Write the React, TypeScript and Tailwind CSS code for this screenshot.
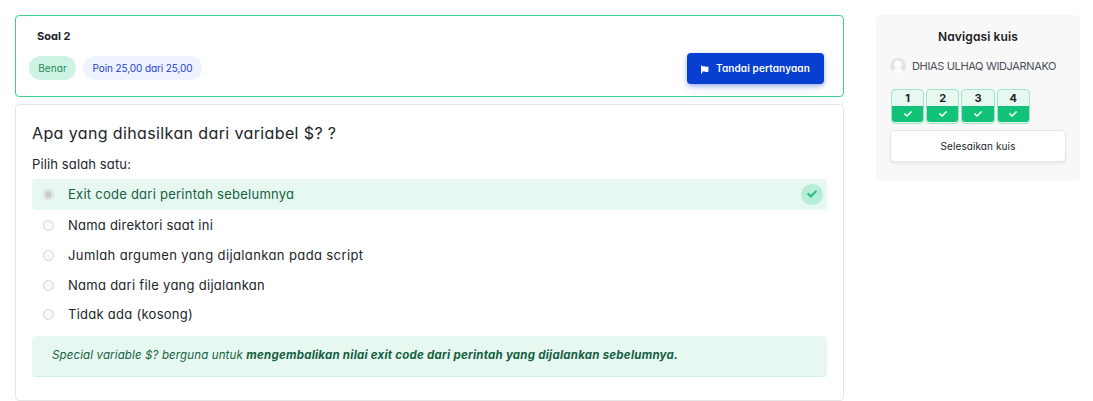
import type { ReactNode } from "react";

function Check({ className }: { className: string }) {
  return (
    <svg viewBox="0 0 512 512" fill="currentColor" className={className} aria-hidden="true">
      <path d="M173.9 439.4L7.5 273c-10-10-10-26.200 0-36.200l36.200-36.200c10-10 26.200-10 36.200 0L192 312.700 432.100 72.600c10-10 26.200-10 36.200 0l36.200 36.200c10 10 10 26.200 0 36.200L210.100 439.400c-10 10-26.200 10-36.200 0z" />
    </svg>
  );
}

function Flag() {
  return (
    <svg viewBox="0 0 8 9" fill="currentColor" className="mt-px h-[9px] w-2" aria-hidden="true">
      <path d="M0 .5h1.200v8H0z" />
      <path d="M1 1.500c1.200-.5 2.100-.4 3.100 0s2 .4 3.300-.1v5.300c-1.300.5-2.300.4-3.300.1S2.200 6.300 1 6.700z" />
    </svg>
  );
}

function Avatar() {
  return (
    <svg viewBox="0 0 16 16" className="size-4 rounded-full" aria-hidden="true">
      <rect width="16" height="16" fill="#e4e4e4" />
      <ellipse cx="8" cy="6.600" rx="3.600" ry="4.100" fill="#fdfdfd" />
      <path d="M2.200 16c0-3.300 1.500-4.600 4-5.400h3.600c2.500.8 4 2.100 4 5.400z" fill="#fdfdfd" />
    </svg>
  );
}

function Radio({ checked = false }: { checked?: boolean }) {
  return (
    <span
      className={
        checked
          ? "flex size-[11px] items-center justify-center rounded-full border border-[#cbd5d0] bg-[#f0f7f4]"
          : "flex size-[11px] items-center justify-center rounded-full border border-[#d4d4d4] bg-[#f8f8f8]"
      }
    >
      {checked && <span className="size-[7px] rounded-full bg-[#c6cecb]" />}
    </span>
  );
}

function Option({ children, className }: { children: ReactNode; className: string }) {
  return (
    <div className="flex h-[29.700px] items-center pl-[11px]">
      <Radio />
      <span className={`ml-[14px] pb-px text-[13px] leading-5 ${className}`}>{children}</span>
    </div>
  );
}

export default function App() {
  return (
    <div className="flex h-[401px] items-start gap-8 overflow-hidden bg-white pt-[15px] pl-[15px] font-['Inter',sans-serif] text-[#212529] [font-feature-settings:'cv11']">
      <main className="flex w-[829px] flex-col gap-[7px]">
        <section className="flex h-[82px] justify-between rounded border border-[#3dcf8e] bg-white">
          <div className="pt-3 pl-[13px]">
            <h3 className="pl-2 text-[11px] leading-4 font-bold text-[#1d2125]">Soal 2</h3>
            <div className="mt-3 flex gap-[7px]">
              <span className="flex h-6 w-[47px] items-center justify-center rounded-full bg-[#cff3e3] text-[10px] tracking-[0.060px] text-[#1d8a5b]">
                Benar
              </span>
              <span className="flex h-6 w-[119px] items-center justify-center rounded-full bg-[#eff3ff] text-[10px] tracking-[-0.100px] text-[#1b3fd0]">
                Poin 25,00 dari 25,00
              </span>
            </div>
          </div>
          <button className="mt-[37px] mr-[19px] flex h-[31px] w-[137px] items-center rounded bg-[#0740d0] pl-[14px] text-[10px] font-semibold tracking-[0.110px] text-white shadow-[0_2px_4px_rgba(7,64,208,0.350),0_4px_12px_rgba(7,64,208,0.100)]">
            <Flag />
            <span className="ml-[7px]">Tandai pertanyaan</span>
          </button>
        </section>

        <section className="h-[297px] rounded border border-[#e3e5e6] bg-white px-4 pt-4">
          <p className="text-[16px] leading-6 tracking-[0.380px]">Apa yang dihasilkan dari variabel $? ?</p>
          <p className="mt-[9px] text-[13px] leading-5 tracking-[0.125px]">Pilih salah satu:</p>
          <div className="mt-[5px] flex h-[31px] items-center rounded bg-[#e7f8f1] pr-1 pl-[11px]">
            <Radio checked />
            <span className="ml-[14px] pb-0.5 text-[13px] leading-5 tracking-[0.250px] text-[#155f43]">
              Exit code dari perintah sebelumnya
            </span>
            <span className="ml-auto flex h-[21px] w-[22px] items-center justify-center rounded-full bg-[#b7edd6] pb-0.5 text-[#1cbf7b]">
              <Check className="size-2.5" />
            </span>
          </div>
          <div className="mt-[1px]">
            <Option className="tracking-[0.230px]">Nama direktori saat ini</Option>
            <Option className="tracking-[0.385px]">Jumlah argumen yang dijalankan pada script</Option>
            <Option className="tracking-[0.275px]">Nama dari file yang dijalankan</Option>
            <Option className="tracking-[0.270px]">Tidak ada (kosong)</Option>
          </div>
          <div className="mt-[6px] h-[41px] rounded border-b border-[#d3f2e4] bg-[#e7f8f1] pt-[10px] pl-5 text-[11.500px] leading-[18px] text-[#155f43] italic">
            <span className="tracking-[0.130px]">Special variable $? berguna untuk </span>
            <strong className="font-bold tracking-[0.240px]">
              mengembalikan nilai exit code dari perintah yang dijalankan sebelumnya.
            </strong>
          </div>
        </section>
      </main>

      <aside className="h-[166px] w-[204px] rounded bg-[#f8f8f8] px-[14px] pt-[13px]">
        <h2 className="text-center text-[12px] leading-[18px] font-semibold tracking-[0.119px] text-[#1d2125]">
          Navigasi kuis
        </h2>
        <div className="mt-3 flex h-4 items-center gap-1.5">
          <Avatar />
          <span className="text-[11px] tracking-[-0.350px] whitespace-nowrap text-[#495057]">
            DHIAS ULHAQ WIDJARNAKO
          </span>
        </div>
        <div className="mt-[15px] flex gap-[2px] pl-[1px]">
          {["1", "2", "3", "4"].map((n) => (
            <div key={n} className="flex h-[35px] w-[33.200px] flex-col rounded border border-[#9ce5c6] bg-[#e7f8f1] pb-px">
              <span className="flex h-4 items-center justify-center text-[11px] font-bold text-[#1d2125]">{n}</span>
              <span className="flex flex-1 items-center justify-center rounded-b-[3px] bg-[#12c278] text-white">
                <Check className="size-2" />
              </span>
            </div>
          ))}
        </div>
        <button className="mt-[6px] flex h-8 w-44 items-center justify-center rounded border border-[#e0e6f0] bg-white text-[10px] tracking-[0.100px] shadow-[0_2px_3px_rgba(0,0,0,0.060)]">
          Selesaikan kuis
        </button>
      </aside>
    </div>
  );
}
